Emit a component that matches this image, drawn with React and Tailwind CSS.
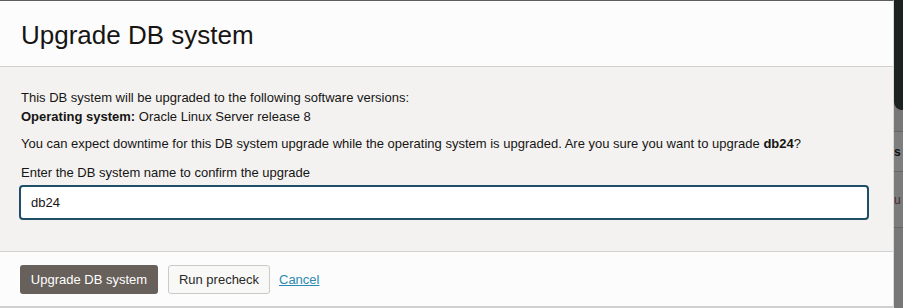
export default function App() {
  return (
    <div className="w-[903px] h-[308px] flex bg-[#7b7b7b] font-['Liberation_Sans',Arial,sans-serif] text-[#161513] overflow-hidden">
      <div className="w-[894px] h-[308px] flex flex-col border-t border-[#5e5e5e] border-r border-r-[#d9d9d9] shrink-0">
        <div className="h-[66px] bg-[#fcfcfc] border-b border-[#d2d2d2] flex items-center pl-[21px] shrink-0">
          <h1 className="text-[26px] leading-none text-[#161513] pt-[2px]">Upgrade DB system</h1>
        </div>
        <div className="h-[185px] bg-[#f3f2f1] border-b border-[#d2d2d2] pl-[21px] pt-[21px] shrink-0 text-[13px]">
          <p className="leading-[19px]">This DB system will be upgraded to the following software versions:</p>
          <p className="leading-[19px]"><span className="font-bold">Operating system:</span> Oracle Linux Server release 8</p>
          <p className="leading-[19px] mt-[8px]">You can expect downtime for this DB system upgrade while the operating system is upgraded. Are you sure you want to upgrade <span className="font-bold">db24</span>?</p>
          <p className="leading-[19px] mt-[10px]">Enter the DB system name to confirm the upgrade</p>
          <div className="ml-[-2px] mt-[3px] w-[850px] h-[35px] rounded-[4px] border-2 border-[#1f4f66] bg-white flex items-center pl-[10px] text-[13px]">
            db24
          </div>
        </div>
        <div className="flex-1 bg-[#fcfcfc] border-b-2 border-[#d0d0d0] pl-[20px] pt-[13px] flex items-start gap-[10px] text-[13px]">
          <button className="h-[29px] w-[138px] rounded-[3px] bg-[#67605b] text-white">Upgrade DB system</button>
          <button className="h-[29px] w-[102px] rounded-[3px] bg-[#f8f8f7] border border-[#c9c9c9] text-[#2b2926]">Run precheck</button>
          <a className="h-[29px] flex items-center text-[#2c8ab0] underline ml-[-1px]">Cancel</a>
        </div>
      </div>
      <div className="flex-1 flex flex-col">
        <div className="h-[110px] bg-[#1c221f] rounded-bl-[8px] shrink-0"></div>
        <div className="h-[22px] bg-[#777777] border-b border-[#666]"></div>
        <div className="h-[40px] bg-[#7e7e7e] border-b border-[#666] flex items-center text-[12px] font-bold text-[#111]">s</div>
        <div className="h-[56px] bg-[#7b7b7b] border-b border-[#666] flex items-center text-[12px] text-[#4a2a2a]">u</div>
        <div className="flex-1 bg-[#777]"></div>
      </div>
    </div>
  );
}
